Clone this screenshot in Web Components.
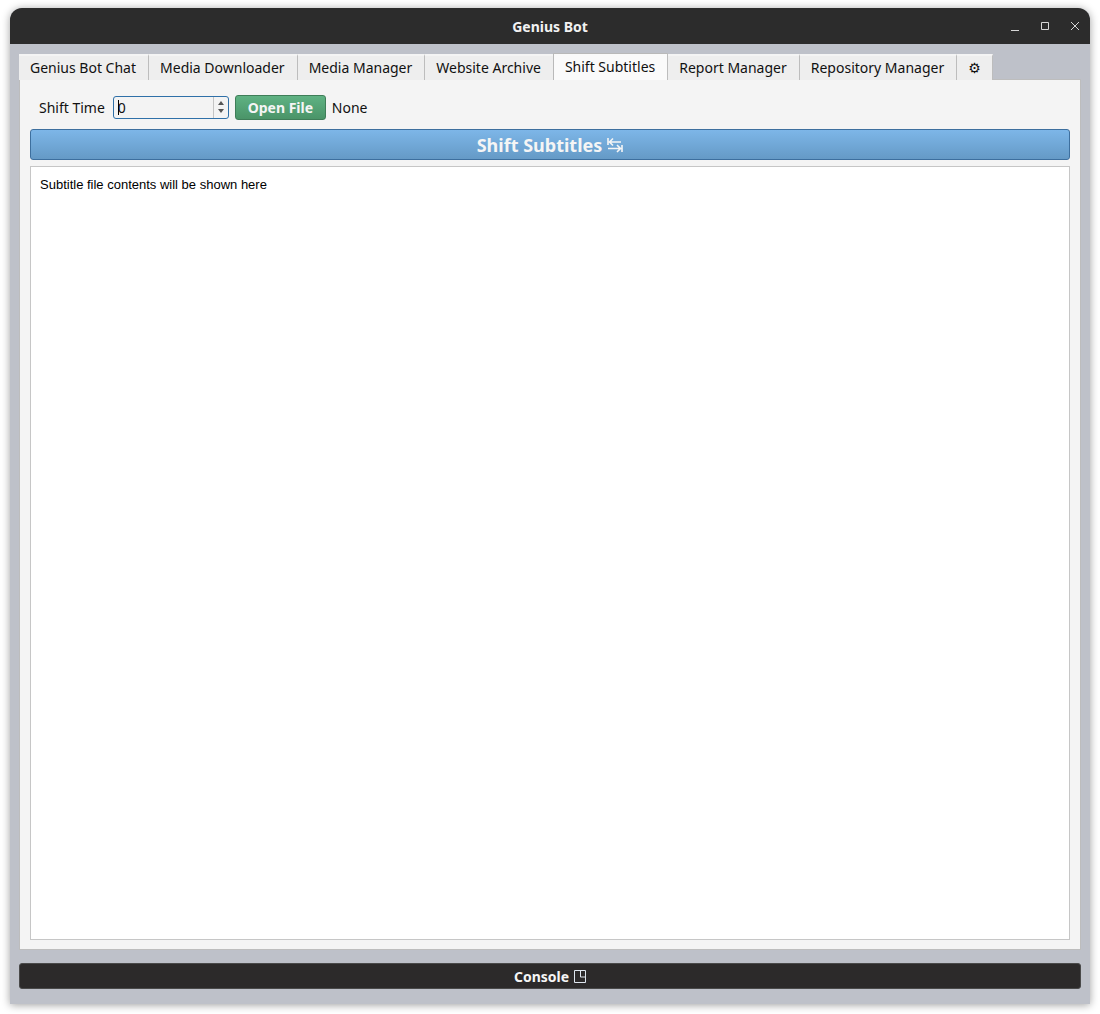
<!DOCTYPE html>
<html>
<head>
<meta charset="utf-8">
<title>Genius Bot</title>
<style>
  html, body { margin: 0; height: 100%; background: #fff; }
  body { font-family: "Noto Sans", sans-serif; overflow: hidden; }
</style>
</head>
<body>
<app-window>
  <title-bar slot="title">Genius Bot</title-bar>
  <tab-strip slot="tabs">
    <tab-item>Genius Bot Chat</tab-item>
    <tab-item>Media Downloader</tab-item>
    <tab-item>Media Manager</tab-item>
    <tab-item>Website Archive</tab-item>
    <tab-item active>Shift Subtitles</tab-item>
    <tab-item>Report Manager</tab-item>
    <tab-item>Repository Manager</tab-item>
    <tab-item icon>⚙</tab-item>
  </tab-strip>
  <shift-pane slot="pane"></shift-pane>
  <console-bar slot="console"></console-bar>
</app-window>

<script>
class AppWindow extends HTMLElement {
  constructor() {
    super();
    this.attachShadow({ mode: "open" }).innerHTML = `
      <style>
      :host { display: block; box-sizing: border-box; height: 1014px; padding: 8px 10px 10px; }
      .frame {
        display: flex;
        flex-direction: column;
        height: 996px;
        background: #bec1c9;
        border-radius: 12px 12px 0 0;
        box-shadow: 0 1px 9px rgba(0,0,0,0.38);
        overflow: hidden;
      }
      .body { flex: 1; display: flex; flex-direction: column; padding: 9px 9px 15px; min-height: 0; }
      .console { margin-top: 13px; }
      </style>
      <div class="frame">
        <slot name="title"></slot>
        <div class="body">
          <slot name="tabs"></slot>
          <slot name="pane"></slot>
          <div class="console"><slot name="console"></slot></div>
        </div>
      </div>`;
  }
}

class TitleBar extends HTMLElement {
  constructor() {
    super();
    this.attachShadow({ mode: "open" }).innerHTML = `
      <style>
      :host { display: flex; align-items: center; justify-content: center; position: relative; height: 36px; background: #2c2c2c; color: #f2f2f2; font: bold 14px "Noto Sans", sans-serif; }
      .btns { position: absolute; right: 0; top: 0; height: 36px; display: flex; align-items: center; gap: 14px; padding-right: 7px; }
      svg { width: 16px; height: 16px; display: block; fill: none; stroke: #d6d6d6; stroke-width: 1; }
      </style>
      <slot></slot>
      <div class="btns">
        <svg viewBox="0 0 16 16"><path d="M4 12.5h8"/></svg>
        <svg viewBox="0 0 16 16"><path d="M4.5 4.5h7v7h-7z"/></svg>
        <svg viewBox="0 0 16 16"><path d="M4 4l8 8M12 4l-8 8"/></svg>
      </div>`;
  }
}

class TabStrip extends HTMLElement {
  constructor() {
    super();
    this.attachShadow({ mode: "open" }).innerHTML = `
      <style>
      :host { display: flex; align-items: flex-end; height: 27px; position: relative; z-index: 1; margin-bottom: -1px; }
      </style>
      <slot></slot>`;
  }
}

class TabItem extends HTMLElement {
  constructor() {
    super();
    this.attachShadow({ mode: "open" }).innerHTML = `
      <style>
      :host {
        display: flex; align-items: center; box-sizing: border-box;
        height: 26px; padding: 0 12px 0 11px;
        background: #eeeeee; color: #111;
        border-top: 2px solid #f4f4f4; border-right: 1px solid #bdbdbd;
        font: 14px/1 "Noto Sans", sans-serif;
        white-space: nowrap;
      }
      :host([active]) {
        height: 27px; background: #fafafa;
        border-top: 1px solid #b9b9b9; border-left: 1px solid #b9b9b9; margin-left: -1px;
      }
      :host([icon]) { font-family: "DejaVu Sans", sans-serif; padding: 0 11px; }
      </style>
      <slot></slot>`;
  }
}

class SpinBox extends HTMLElement {
  constructor() {
    super();
    this.attachShadow({ mode: "open" }).innerHTML = `
      <style>
      :host { display: flex; box-sizing: border-box; width: 116px; height: 23px; background: #f3f3f3; border: 1px solid #2f70a8; border-radius: 3px; color: #111; font: 14px "Noto Sans", sans-serif; }
      .val { flex: 1; padding-left: 4px; line-height: 21px; position: relative; }
      .val::before { content: ""; position: absolute; left: 4px; top: 3px; height: 15px; width: 1px; background: #000; }
      .arrows { width: 14px; border-left: 1px solid #c4c4c4; display: flex; flex-direction: column; align-items: center; justify-content: center; gap: 4px; }
      .up { border: 3.5px solid transparent; border-top: 0; border-bottom: 4px solid #555; }
      .down { border: 3.5px solid transparent; border-bottom: 0; border-top: 4px solid #555; }
      </style>
      <div class="val"><slot></slot></div>
      <div class="arrows"><div class="up"></div><div class="down"></div></div>`;
  }
}

class GradButton extends HTMLElement {
  constructor() {
    super();
    this.attachShadow({ mode: "open" }).innerHTML = `
      <style>
      :host { display: flex; align-items: center; justify-content: center; gap: 5px; box-sizing: border-box; color: #f5f5f5; font: bold 14px "Noto Sans", sans-serif; white-space: nowrap; }
      :host([kind="green"]) {
        width: 91px; height: 25px; border: 1px solid #3f7d58; border-radius: 3px;
        background: linear-gradient(#5fb283, #4a9468);
      }
      :host([kind="blue"]) {
        height: 31px; border: 1px solid #3d6f9e; border-radius: 3px;
        background: linear-gradient(#7db6e8, #659ac6);
        font-size: 18px;
      }
      :host([kind="dark"]) {
        height: 26px; border: 1px solid #4a4a4a; border-radius: 3px;
        background: #2c2a2a;
      }
      </style>
      <slot></slot>`;
  }
}

class ShiftPane extends HTMLElement {
  constructor() {
    super();
    this.attachShadow({ mode: "open" }).innerHTML = `
      <style>
      :host { display: flex; flex-direction: column; flex: 1; height: 870px; box-sizing: border-box; background: #f4f4f4; border: 1px solid #bdbdbd; padding: 9px 10px; color: #111; font: 14px "Noto Sans", sans-serif; }
      .row { display: flex; align-items: center; height: 32px; padding-left: 9px; margin-top: 2px; }
      .row span:first-child { margin-right: 8px; }
      spin-box { margin-right: 6px; }
      .none { margin-left: 6px; }
      grad-button[kind="blue"] { margin-top: 6px; }
      .view { flex: 1; margin-top: 6px; background: #fff; border: 1px solid #c6c6c6; padding: 9px; font: 13px/17px "Liberation Sans", sans-serif; color: #000; }
      svg { width: 16px; height: 16px; fill: none; stroke: #f5f5f5; stroke-width: 1.6; }
      </style>
      <div class="row">
        <span>Shift Time</span>
        <spin-box>0</spin-box>
        <grad-button kind="green">Open File</grad-button>
        <span class="none">None</span>
      </div>
      <grad-button kind="blue">Shift Subtitles
        <svg viewBox="0 0 16 16"><path d="M1 1v7M14 5H2.5M6 1.5L2.5 5 6 8.500M15 8v7M1 11.500h12.500M10 8l3.500 3.500L10 15"/></svg>
      </grad-button>
      <div class="view">Subtitle file contents will be shown here</div>`;
  }
}

class ConsoleBar extends HTMLElement {
  constructor() {
    super();
    this.attachShadow({ mode: "open" }).innerHTML = `
      <style>
      :host { display: block; }
      svg { width: 12px; height: 13px; fill: none; stroke: #dfe6ee; stroke-width: 1; }
      </style>
      <grad-button kind="dark">Console
        <svg viewBox="0 0 12 13"><path d="M.5 .5h11v12H.5zM6.500 .5v6.500h5"/></svg>
      </grad-button>`;
  }
}

customElements.define("app-window", AppWindow);
customElements.define("title-bar", TitleBar);
customElements.define("tab-strip", TabStrip);
customElements.define("tab-item", TabItem);
customElements.define("spin-box", SpinBox);
customElements.define("grad-button", GradButton);
customElements.define("shift-pane", ShiftPane);
customElements.define("console-bar", ConsoleBar);
</script>
</body>
</html>
